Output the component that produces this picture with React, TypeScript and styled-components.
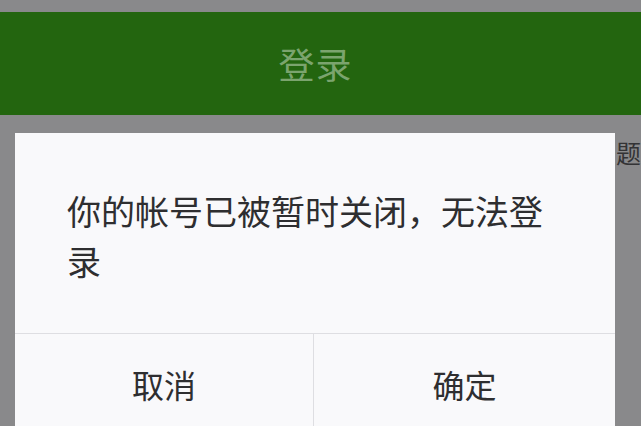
import styled, { createGlobalStyle } from "styled-components";

const GlobalStyle = createGlobalStyle`
  html, body {
    margin: 0;
    padding: 0;
    background: #89898b;
    overflow: hidden;
  }
  body {
    font-family: "Noto Sans CJK SC", "Noto Sans", sans-serif;
  }
`;

const Screen = styled.div`
  width: 641px;
  height: 426px;
  display: flex;
  flex-direction: column;
  overflow: hidden;
  background: #89898b;
`;

const StatusStrip = styled.div`
  height: 12px;
  flex-shrink: 0;
`;

const Header = styled.div`
  height: 103px;
  flex-shrink: 0;
  background: #23650f;
  display: flex;
  align-items: center;
  justify-content: center;
  color: #7ba46e;
  font-size: 36px;
  letter-spacing: 1px;
  padding-right: 10px;
  padding-bottom: 2px;
  box-sizing: border-box;
`;

const Body = styled.div`
  display: flex;
  align-items: flex-start;
  padding: 18px 0 0 15px;
`;

const Dialog = styled.div`
  width: 600px;
  flex-shrink: 0;
  background: #f9f9fb;
  display: flex;
  flex-direction: column;
`;

const Message = styled.div`
  padding: 53px 52px 47px 52px;
  font-size: 34px;
  line-height: 50px;
  color: #2e2e30;
`;

const Actions = styled.div`
  display: grid;
  grid-template-columns: 299px 1fr;
  border-top: 1px solid #dedee2;
`;

const ActionButton = styled.button<{ $divider?: boolean }>`
  height: 104px;
  border: none;
  border-right: ${(p) => (p.$divider ? "1px solid #dedee2" : "none")};
  background: transparent;
  font-family: inherit;
  font-size: 32px;
  color: #2e2e30;
  padding: 0;
  padding-bottom: 4px;
  cursor: pointer;
`;

const Peek = styled.span`
  margin: 4px 0 0 1px;
  font-size: 25px;
  line-height: 30px;
  color: #333335;
  white-space: nowrap;
`;

export default function App() {
  return (
    <>
      <GlobalStyle />
      <Screen>
        <StatusStrip />
        <Header>登录</Header>
        <Body>
          <Dialog>
            <Message>你的帐号已被暂时关闭，无法登录</Message>
            <Actions>
              <ActionButton $divider>取消</ActionButton>
              <ActionButton>确定</ActionButton>
            </Actions>
          </Dialog>
          <Peek>题</Peek>
        </Body>
      </Screen>
    </>
  );
}
